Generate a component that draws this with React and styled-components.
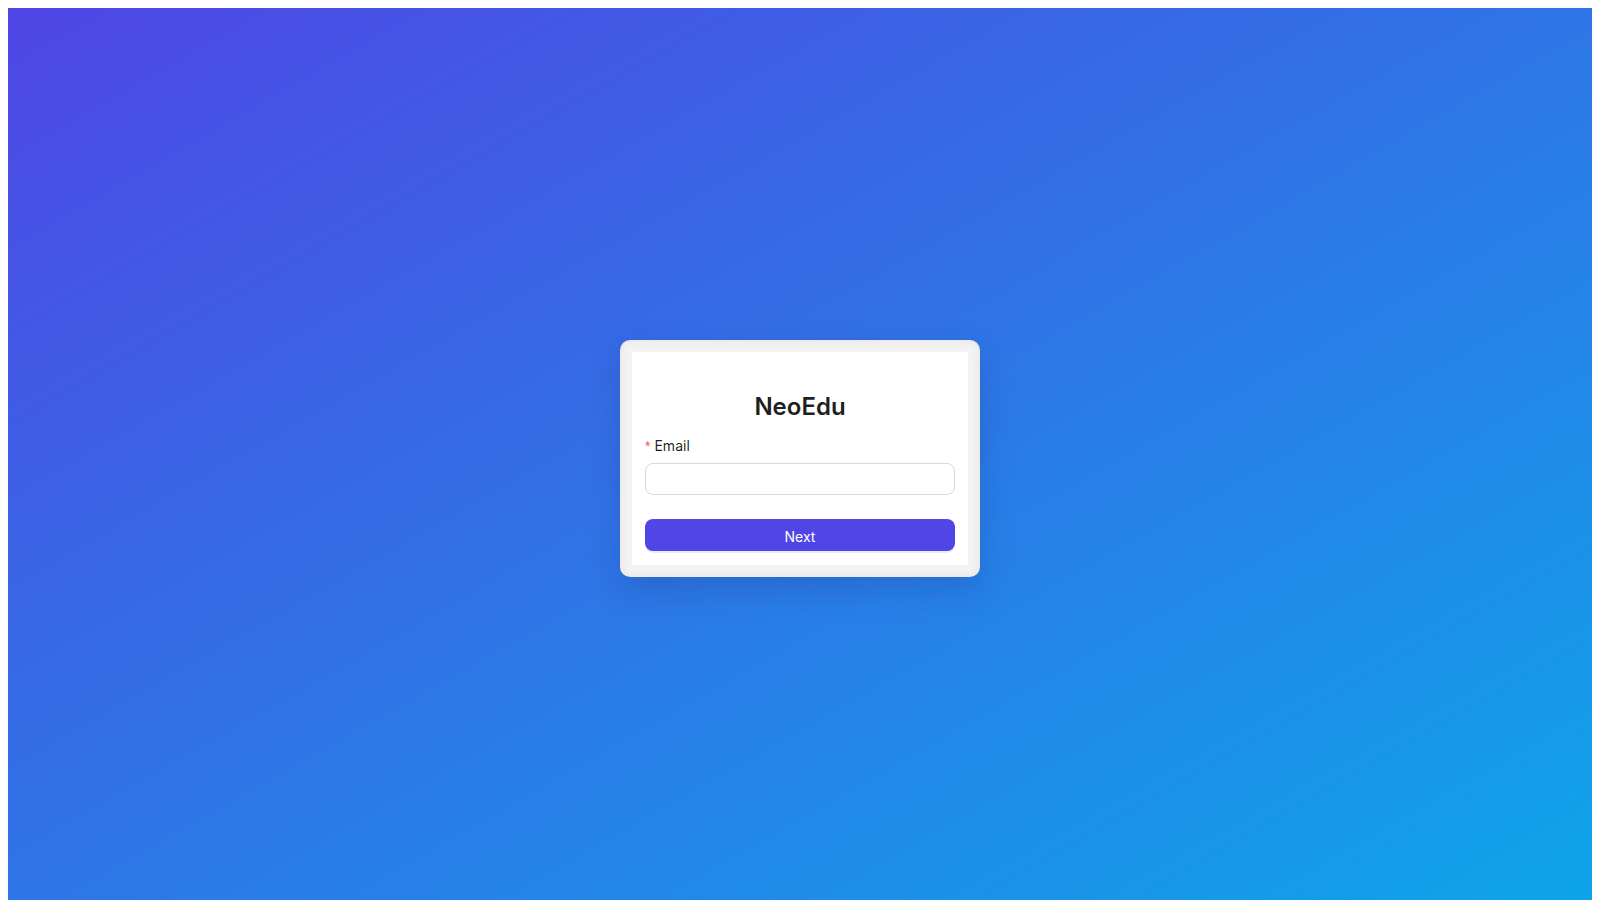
import styled, { createGlobalStyle } from "styled-components";

const GlobalStyle = createGlobalStyle`
  body {
    font-family: Inter, "Noto Sans", "Liberation Sans", sans-serif;
    color: rgba(0, 0, 0, 0.88);
  }
  * {
    box-sizing: border-box;
  }
`;

const Page = styled.div`
  min-height: 100vh;
  display: flex;
  align-items: center;
  justify-content: center;
  background: linear-gradient(to bottom right, #4f46e5, #0ea5e9);
`;

const Card = styled.div`
  width: 360px;
  padding: 12px;
  border-radius: 10px;
  background: #f3f3f4;
  box-shadow: inset 0 0 10px rgba(0, 0, 0, 0.07),
    0 12px 32px rgba(30, 40, 120, 0.22);
`;

const Panel = styled.form`
  background: #ffffff;
  padding: 39px 13px 14px;
`;

const Title = styled.h1`
  margin: 0 0 11px;
  text-align: center;
  font-size: 24px;
  line-height: 32px;
  font-weight: 600;
  color: #1f1f1f;
`;

const Field = styled.div`
  margin-bottom: 24px;
`;

const Label = styled.label`
  display: block;
  padding-top: 1px;
  padding-bottom: 6px;
  font-size: 14px;
  line-height: 22px;
  color: rgba(0, 0, 0, 0.88);
`;

const Required = styled.span`
  color: #ff4d4f;
  margin-right: 4px;
  font-family: SimSun, sans-serif;
`;

const Input = styled.input`
  display: block;
  width: 100%;
  height: 32px;
  padding: 4px 11px;
  border: 1px solid #d9d9d9;
  border-radius: 8px;
  font-size: 14px;
  font-family: inherit;
  outline: none;
  background: #fff;
`;

const Button = styled.button`
  display: block;
  width: 100%;
  height: 32px;
  padding: 4px 15px 0;
  border: none;
  border-radius: 8px;
  background: #4f46e5;
  color: #fff;
  font-size: 14px;
  font-family: inherit;
  box-shadow: 0 2px 0 rgba(79, 70, 229, 0.1);
  cursor: pointer;
`;

export default function App() {
  return (
    <>
      <GlobalStyle />
      <Page>
        <Card>
          <Panel onSubmit={(e) => e.preventDefault()}>
            <Title>NeoEdu</Title>
            <Field>
              <Label htmlFor="email">
                <Required>*</Required>Email
              </Label>
              <Input id="email" type="email" />
            </Field>
            <Button type="submit">Next</Button>
          </Panel>
        </Card>
      </Page>
    </>
  );
}
